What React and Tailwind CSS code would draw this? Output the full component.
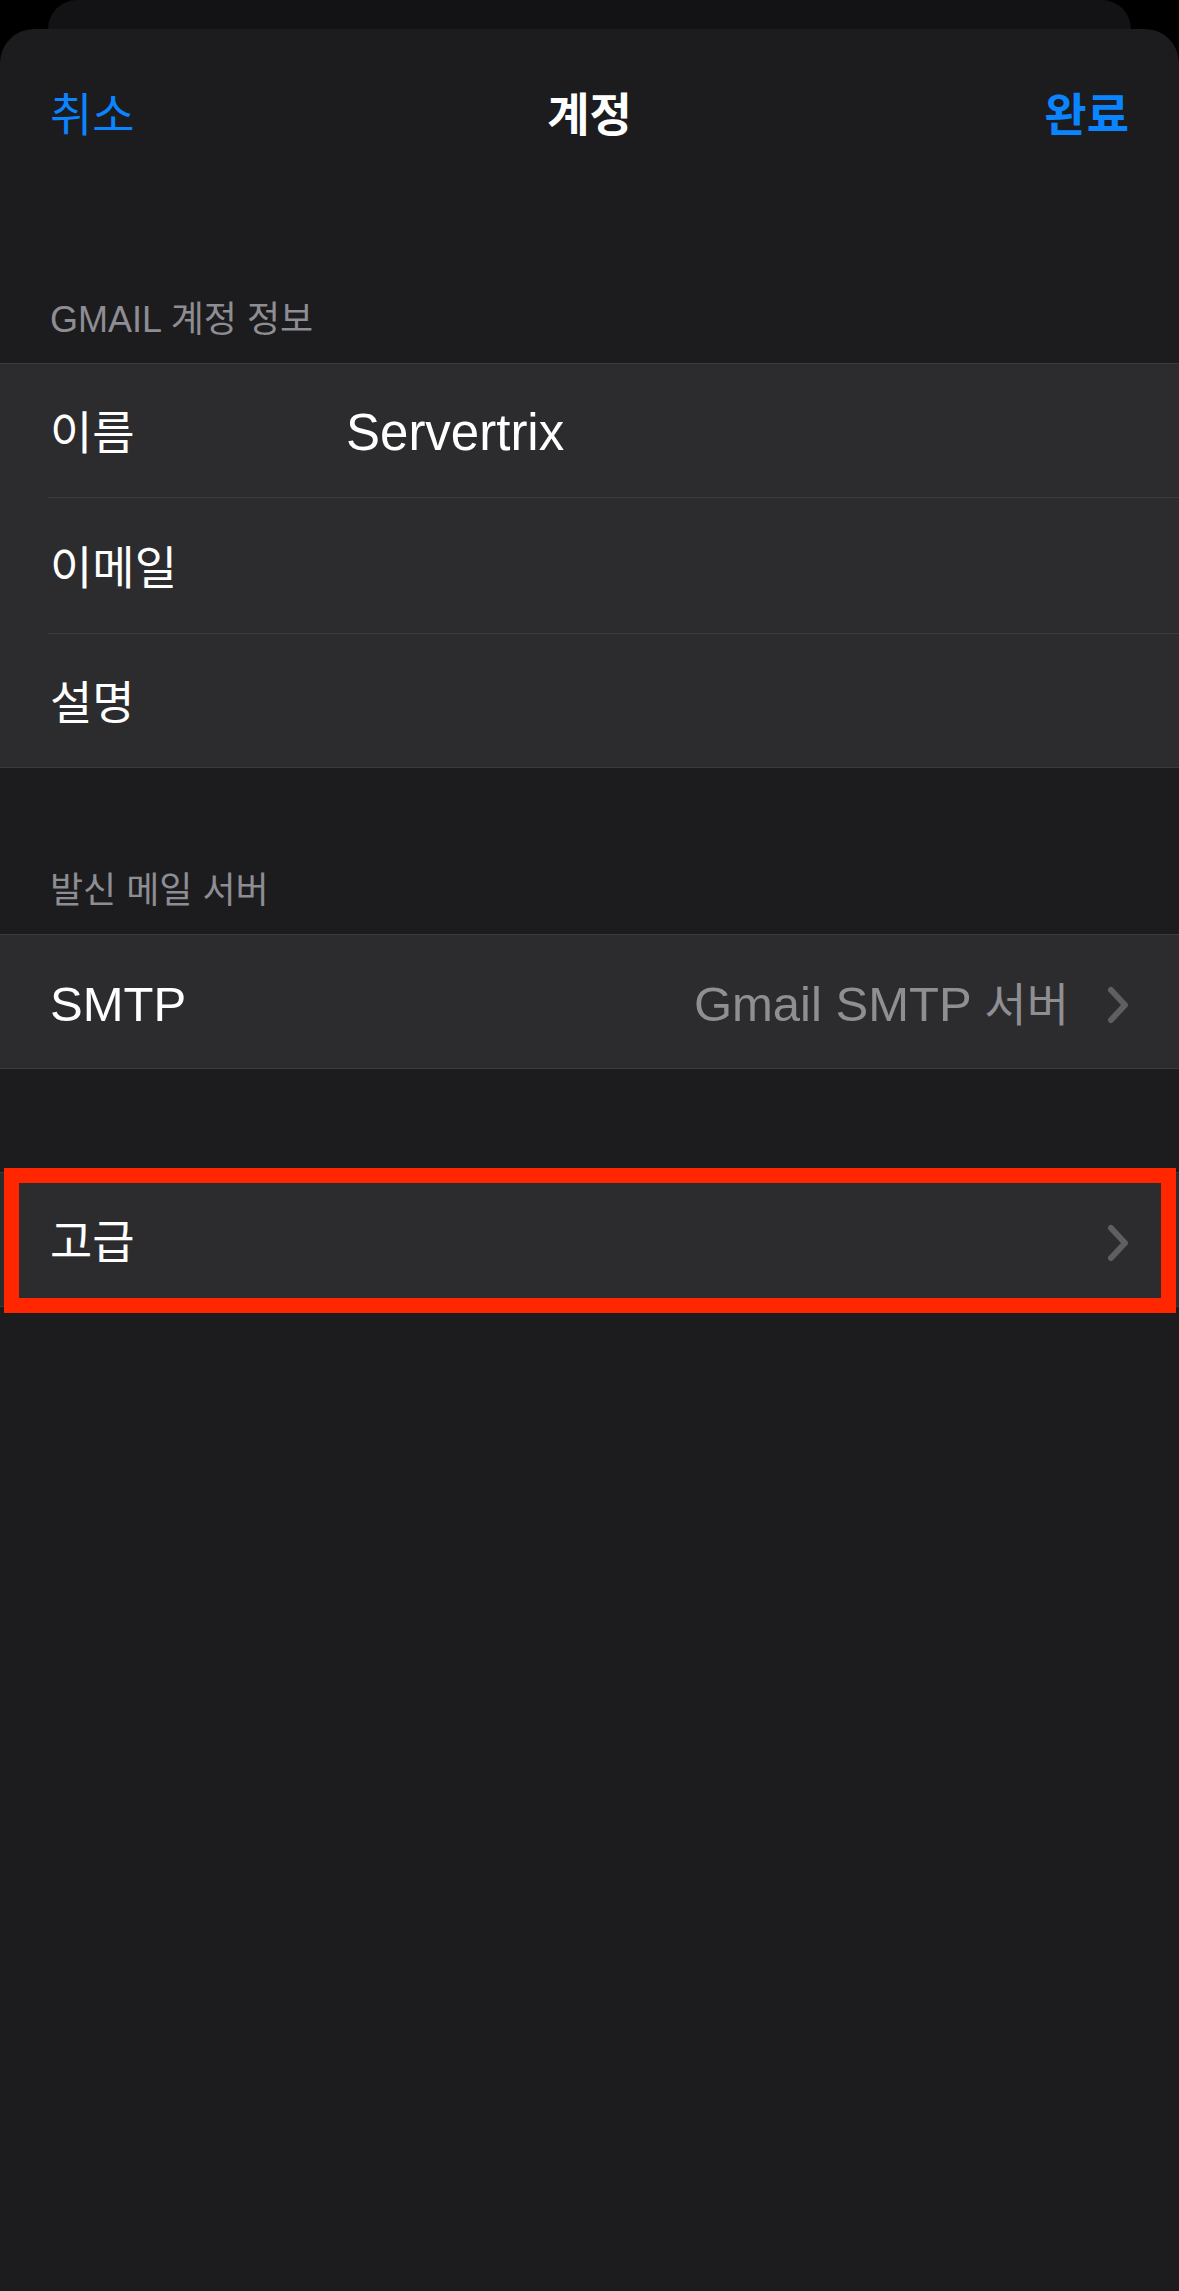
import React from 'react';

const font = { fontFamily: '"Liberation Sans", "Noto Sans CJK KR", sans-serif' };

const Chevron = () => (
    <svg width="22" height="38" viewBox="0 0 22 38" className="shrink-0">
        <path d="M4 4 L18 19 L4 34" fill="none" stroke="#5e5e63" strokeWidth="6" strokeLinecap="round" strokeLinejoin="round" />
    </svg>
);

const SectionHeader = ({ children, tall }) => (
    <div className={(tall ? 'h-[168px]' : 'h-[166px]') + ' flex items-end pb-[21px] pl-[50px] text-[36px] leading-[44px] text-[#8d8d93]'}>
        {children}
    </div>
);

const App = () => {
    return (
        <div className="w-[1179px] h-[2291px] bg-black overflow-hidden text-white" style={font}>
            {/* card behind the sheet */}
            <div className="mx-[48px] h-[29px] rounded-t-[32px] bg-[#131315]" />

            <div className="h-[2262px] bg-[#1c1c1e] rounded-t-[34px]">
                {/* Nav bar */}
                <div className="h-[166px] pt-[6px] flex items-center justify-between px-[50px] text-[46px] leading-[56px]">
                    <span className="text-[#0a84ff]">취소</span>
                    <span className="font-semibold">계정</span>
                    <span className="text-[#0a84ff] font-semibold">완료</span>
                </div>

                <SectionHeader tall>GMAIL 계정 정보</SectionHeader>

                {/* Account info */}
                <div className="bg-[#2c2c2e] border-y border-[#3a3a3c]">
                    <div className="h-[133px] pt-[6px] flex items-center pl-[50px] text-[46px]">
                        <span className="w-[296px]">이름</span>
                        <span className="text-[51px]">Servertrix</span>
                    </div>
                    <div className="ml-[48px] border-t border-[#3a3a3c]" />
                    <div className="h-[135px] pt-[6px] flex items-center pl-[50px] text-[46px]">
                        <span>이메일</span>
                    </div>
                    <div className="ml-[48px] border-t border-[#3a3a3c]" />
                    <div className="h-[133px] pt-[6px] flex items-center pl-[50px] text-[46px]">
                        <span>설명</span>
                    </div>
                </div>

                <SectionHeader>발신 메일 서버</SectionHeader>

                {/* Outgoing server */}
                <div className="bg-[#2c2c2e] border-y border-[#3a3a3c]">
                    <div className="h-[133px] pt-[6px] flex items-center justify-between pl-[50px] pr-[50px]">
                        <span className="text-[49px]">SMTP</span>
                        <div className="flex items-center gap-[38px]">
                            <span className="text-[49px] text-[#8e8e93]">
                                Gmail SMTP <span className="text-[46px]">서버</span>
                            </span>
                            <Chevron />
                        </div>
                    </div>
                </div>

                <div className="h-[103px]" />

                {/* Advanced */}
                <div className="relative bg-[#2c2c2e] border-y border-[#3a3a3c]">
                    <div className="h-[133px] pt-[6px] flex items-center justify-between pl-[50px] pr-[50px]">
                        <span className="text-[46px]">고급</span>
                        <Chevron />
                    </div>
                    <div className="absolute top-[-5px] left-[4px] right-[3px] bottom-[-7px] border-[15px] border-[#ff2600]" />
                </div>
            </div>
        </div>
    );
};

export default App;
